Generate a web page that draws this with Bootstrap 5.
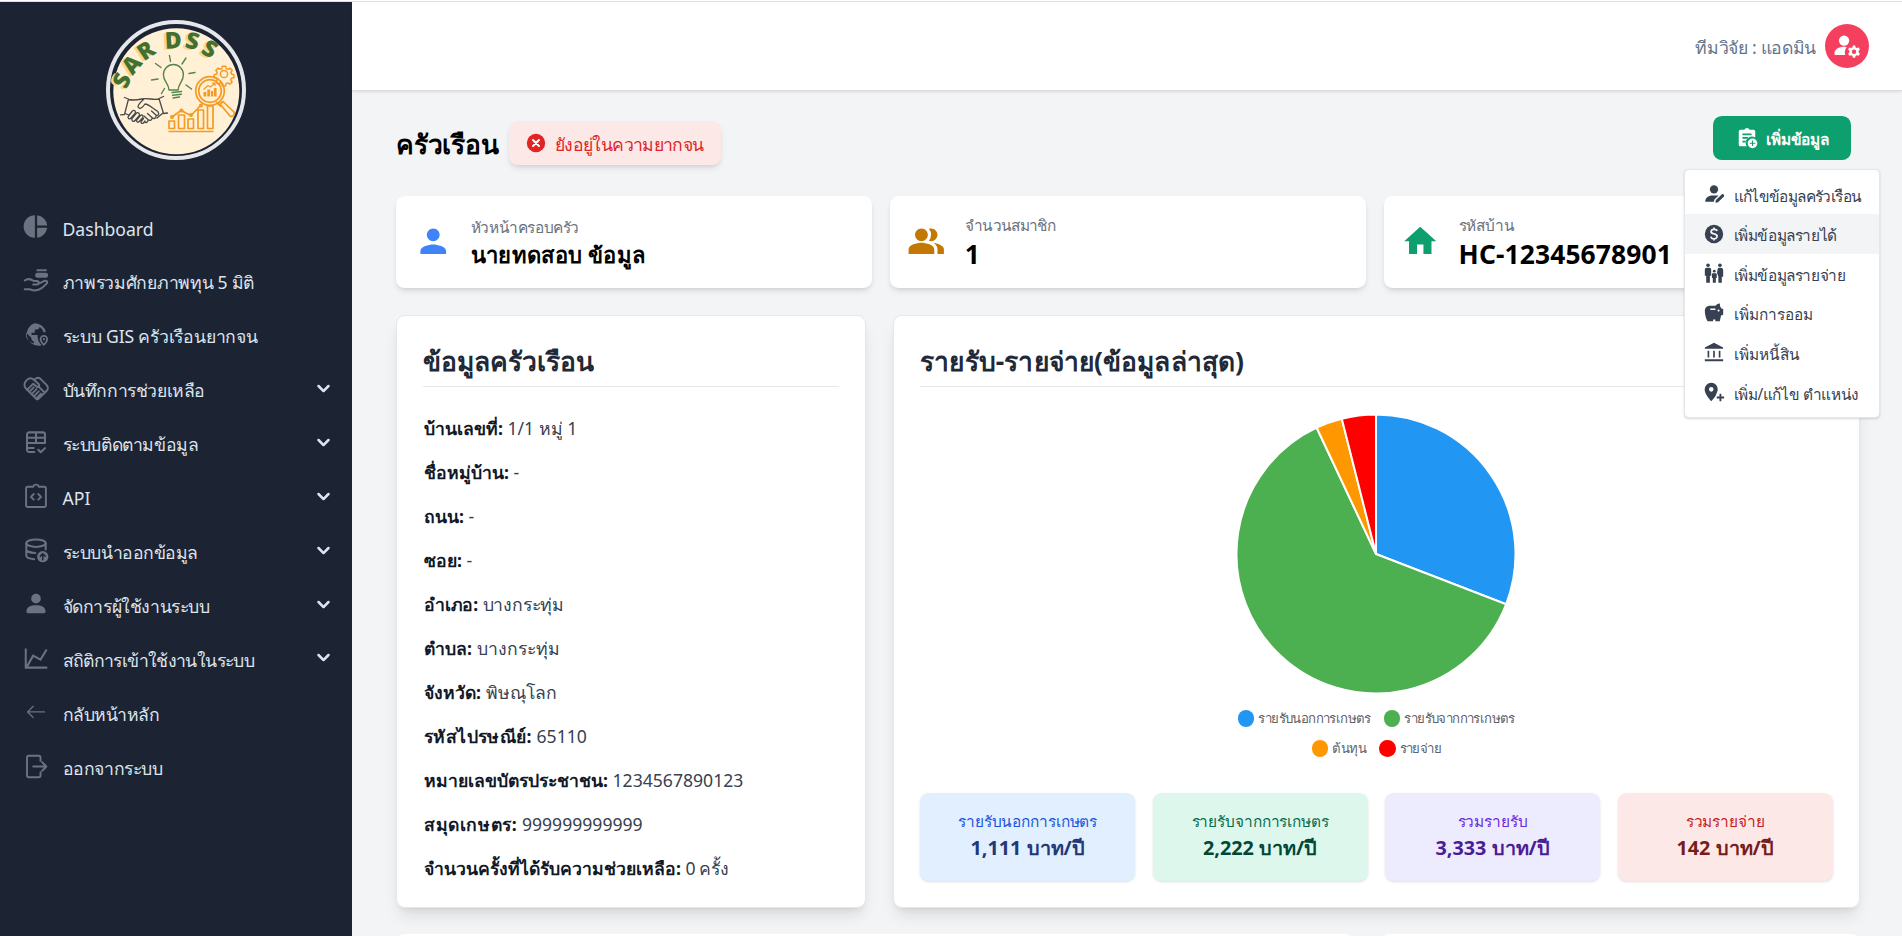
<!DOCTYPE html>
<html lang="th">
<head>
<meta charset="utf-8">
<meta name="viewport" content="width=device-width, initial-scale=1">
<title>SAR DSS</title>
<link rel="stylesheet" href="https://cdn.jsdelivr.net/npm/bootstrap@5.3.0/dist/css/bootstrap.min.css">
<style>
html{font-size:17.6px}
body{font-family:"Noto Sans",sans-serif;background:#f3f4f6;color:#000;line-height:1.5}
.app-shell{height:936px;border-top:1px solid #fff;overflow:hidden}
.app-frame{border-top:1px solid #dfe0e3;height:935px;overflow:hidden}
.app-side{width:352px;background:#1c2434;padding-top:18px}
.brand-ring{width:140px;height:140px;border:4px solid #e5e7eb;margin-bottom:40px}
.brand-ring svg{overflow:visible}
.side-nav .nav-link{height:53.95px;color:#dee4ee;padding:0 16px 0 20.5px;line-height:1.5}
.side-nav .nav-link span{margin-left:12px;padding-top:3.500px}
.side-nav .ico{width:30px;height:27px;color:#6b7280;flex:none}
.chev{width:25px;height:25px;margin-top:-1px}
/* tracking steps */
.tk2{letter-spacing:-.2px}.tk3{letter-spacing:-.3px}.tk4{letter-spacing:-.4px}.tk5{letter-spacing:-.5px}.tk6{letter-spacing:-.62px}
.tw2{letter-spacing:.12px}.tw3{letter-spacing:.27px}.tw4{letter-spacing:.4px}.tw6{letter-spacing:.6px}
.top-head{height:89px;border-bottom:1px solid #dcdde0;box-shadow:0 1px 3px rgba(0,0,0,.1);padding-right:33px}
.who{color:#64748b;padding-top:3px}
.avatar{width:44px;height:44px;background:#f43f5e}
.page-body{padding:25px 42px 0 44px}
.head-row{height:80px}
.head-left{margin-top:5px}
.page-title{font-size:1.5rem;font-weight:700;line-height:2rem;padding-top:3px}
.status-pill{background:#fde8e8;color:#e02424;height:44px;border-radius:.5rem;box-shadow:0 4px 6px -1px rgba(0,0,0,.1),0 2px 4px -2px rgba(0,0,0,.1);padding:0 17.6px 0 17px;margin-left:10.500px}
.status-pill span{padding-top:2px}
.add-btn{background:#0e9f6e;color:#fff;width:138px;height:44px;border-radius:.5rem;font-size:.875rem;font-weight:600;border:0}
.add-btn span{padding-top:3px}
.add-menu{top:53px;right:-28.500px;width:195.5px;border:1px solid #e5e7eb;border-radius:.25rem;padding:4.8px 0;font-size:.875rem;box-shadow:0 1px 3px rgba(0,0,0,.1),0 1px 2px rgba(0,0,0,.06);min-width:0;z-index:10}
.add-menu .dropdown-item{height:39.6px;padding:3px 0 0 17.6px;color:#374151;gap:8.8px}
.add-menu .dropdown-item.hot{background:#f3f4f6}
.add-menu svg{width:22px;height:22px;margin-top:-4px;flex:none}
.tri{display:grid;grid-template-columns:repeat(3,1fr)}
.kpi{background:#fff;height:92.4px;border-radius:.5rem;box-shadow:0 4px 6px -1px rgba(0,0,0,.1),0 2px 4px -2px rgba(0,0,0,.1);gap:18.8px}
.kpi>svg{width:38.5px;height:38.5px;flex:none;margin-top:-1px}
.kpi>div{padding-top:2px}
.kpi-label{font-size:.875rem;line-height:22px;color:#6b7280}
.kpi-val{font-size:1.5rem;line-height:2rem;font-weight:700}
.kpi-val.name{font-size:1.25rem;line-height:1.75rem}
.panel{background:#fff;border:1px solid #e5e7eb;border-radius:.5rem;box-shadow:0 10px 15px -3px rgba(0,0,0,.1),0 4px 6px -4px rgba(0,0,0,.1);padding:26.4px;height:593px}
.panel-title{font-size:1.5rem;line-height:2rem;font-weight:700;color:#1f2937;border-bottom:1px solid #e5e7eb;padding:2px 0 6.8px;margin:0}
.facts{margin:27.4px 0 0;padding-left:.6px;color:#374151}
.facts div{line-height:26.4px;margin-bottom:17.6px}
.facts b{color:#111827}
.wide{grid-column:span 2}
.pie{width:282px;height:282px;margin:25.600px auto 0;display:block}
.legend-row{font-size:13.2px;color:#5f6368;height:30px;gap:13px;letter-spacing:-.6px}
.legend-row i{width:16.6px;height:16.6px;border-radius:50%;margin-right:4px}
.c-blue{background:#2196f3}.c-green{background:#4caf50}.c-orange{background:#ff9800}.c-red{background:#f00}
.pie-legend{margin-top:9px}
.quad{display:grid;grid-template-columns:repeat(4,1fr);gap:17.6px;margin-top:29px}
.tile{height:88px;border-radius:.5rem;padding-top:18.4px;text-align:center;box-shadow:0 1px 3px rgba(0,0,0,.1),0 1px 2px -1px rgba(0,0,0,.1)}
.tile small{display:block;font-size:.875rem;line-height:22px;letter-spacing:-.12px}
.tile strong{display:block;font-size:1.125rem;line-height:30.8px}
.t-blue{background:#e1effe;color:#1a56db}.t-blue strong{color:#233876}
.t-green{background:#def7ec;color:#046c4e}.t-green strong{color:#014737}
.t-purple{background:#edebfe;color:#6c2bd9}.t-purple strong{color:#4a1d96}
.t-red{background:#fde8e8;color:#c81e1e}.t-red strong{color:#771d1d}
.next-row{display:grid;grid-template-columns:2fr 1fr;gap:26.4px;margin-top:26px}
.next-row div{background:#fff;border-radius:.5rem .5rem 0 0;height:40px}
</style>
</head>
<body>
<svg class="d-none" xmlns="http://www.w3.org/2000/svg">
<symbol id="chev" viewBox="0 0 20 20"><path fill="currentColor" d="M5.293 7.293a1 1 0 0 1 1.414 0L10 10.586l3.293-3.293a1 1 0 1 1 1.414 1.414l-4 4a1 1 0 0 1-1.414 0l-4-4a1 1 0 0 1 0-1.414z"/></symbol>
</svg>
<div class="app-shell"><div class="app-frame d-flex">
<aside class="app-side flex-shrink-0 d-flex flex-column align-items-center">
  <div class="brand-ring rounded-circle flex-shrink-0">
    <svg width="132" height="132" viewBox="110 24 132 132" fill="none">
      <circle cx="176.3" cy="91.3" r="63" fill="#fff0d6"/>
      <g font-family="Open Sans,Noto Sans,sans-serif" font-weight="800" font-size="23" text-anchor="middle">
        <g fill="#f7d68f" transform="translate(-2.500 1)"><text y="8.300" transform="translate(121.700 80.300) rotate(-66)">S</text><text y="8.300" transform="translate(131.500 64.300) rotate(-50)">A</text><text y="8.300" transform="translate(145.700 50.300) rotate(-34)">R</text><text y="8.300" transform="translate(173.300 40) rotate(-3)">D</text><text y="8.300" transform="translate(192.700 40.700) rotate(13)">S</text><text y="8.300" transform="translate(210 48.500) rotate(30)">S</text></g>
        <g fill="#42702f"><text y="8.300" transform="translate(121.700 80.300) rotate(-66)">S</text><text y="8.300" transform="translate(131.500 64.300) rotate(-50)">A</text><text y="8.300" transform="translate(145.700 50.300) rotate(-34)">R</text><text y="8.300" transform="translate(173.300 40) rotate(-3)">D</text><text y="8.300" transform="translate(192.700 40.700) rotate(13)">S</text><text y="8.300" transform="translate(210 48.500) rotate(30)">S</text></g>
      </g>
      <g stroke="#54864a" stroke-width="1.4" stroke-linecap="round" stroke-linejoin="round">
        <path d="M169 90c-.3-7-5.600-8-5.600-15.500a10 10 0 0 1 20 0c0 7.500-4.800 8.500-5.300 15.500zM172 92.500l9.500-1M172.500 95.200l9-1M173 98l6.500-1M170.500 61.500l-1-6M182 64l4-6M189 73.500l6-1M186 85l5.500 4M161 67.500l-5.500-4M158 79l-6.500 1M164.500 88.500l-3 5"/>
      </g>
      <g stroke="#4a4a4a" stroke-width="1.300" stroke-linecap="round" stroke-linejoin="round">
        <path d="M124.500 97.500l4 1.500-4 15.500-4 .3M163.500 96.500l-4.500 2 4.500 15 4-.5M128.500 99.500c5 1 9 .5 13-.5 6-1.500 12 1.500 17.500 0M144 99c-3 3-6 5-6 8 2 3 5 0 7-3 4 0 7 4 13 7.500M125 113.500l4 1.500M163 113l-6 5M158 112c1.500 2 .5 3.500-1.500 3.500l-5-4.500M156 116c0 2.500-2 3-3.500 2l-5-4.500M152 118.500c-.5 2-2.500 2.500-4 1l-4-3.500M148 120.500c-.5 2-2 2.500-3.500 1.500"/>
        <path d="M132 111.500l-3.500 4.500c-1.500 2 .8 4 2.500 2l4-4.500c1.500-2-1-4.500-3-2zM136.500 113l-4.500 5.500c-1 2 1.500 4 3 2l4-4.500c1.500-2-1-4.500-2.500-3zM140.500 115.500l-3.500 4c-1.500 2 .8 3.500 2.200 2l3.300-3.500c1.500-2-.5-4-2-2.500zM143.500 118.500l-2 2.500c-1.500 2 .8 3 2 2l1.500-2"/>
      </g>
      <g stroke="#f59a22" stroke-width="1.700" stroke-linejoin="round">
        <path d="M168.500 131.500h45M169 121h5.500v7.500H169zM178.500 115h6v13.500h-6zM188 119h5.500v9.500H188zM198 110h5.500v18.500H198zM207.500 106h5.500v22.500h-5.500zM172 117l9-6.500 10 5 10-10.500"/>
        <circle cx="210" cy="91" r="14.300"/><circle cx="210" cy="91" r="11.300"/>
        <path d="M220 104l3-2.500 11 10.500c1.500 2.500-1.500 5.500-4 4zM216 102l5 4.500"/>
        <circle cx="224" cy="74" r="3.600" stroke-width="1.500"/>
        <path stroke-width="1.500" d="M222.300 66.300h3.400l.5 2.400 1.600.7 2.100-1.300 2.300 2.300-1.300 2.100.6 1.600 2.400.6v3l-2.400.6-.7 1.500 1.300 2.100-2.300 2.300-2.100-1.300-1.500.6-.6 2.400h-3.200l-.5-2.400-1.600-.6-2.100 1.300-2.300-2.300 1.300-2.100-.6-1.500-2.400-.6v-3l2.400-.6.6-1.600-1.300-2.100 2.300-2.300 2.100 1.300 1.500-.7z"/>
        <circle cx="172" cy="117" r="1.200"/><circle cx="181.500" cy="110.500" r="1.200"/><circle cx="191" cy="115" r="1.200"/><circle cx="201" cy="105.500" r="1.200"/>
        <g fill="#f59a22" stroke="none"><path d="M203.500 92h2.800v4.500h-2.800zM207.300 89.500h2.800v7h-2.800zM211 91h2v5.500h-2zM213.800 88h2.800v8.500h-2.800z"/></g>
        <path stroke-width="1.200" d="M203.500 89.500l4.500-4 2.500 1.500 4-3.500M212 83.200h3v2.800"/>
      </g>
    </svg>
  </div>
  <nav class="side-nav nav flex-column w-100 flex-nowrap">
    <a class="nav-link d-flex align-items-center" href="#"><svg class="ico" viewBox="0 0 24 24" fill="currentColor"><path d="M11 2v20a10 10 0 0 1 0-20zM13 2.050V11h8.950A10 10 0 0 0 13 2.050zM13 13v8.950A10 10 0 0 0 21.950 13z"/></svg><span>Dashboard</span></a>
    <a class="nav-link d-flex align-items-center" href="#"><svg class="ico" viewBox="0 0 24 24" fill="none" stroke="currentColor" stroke-width="1.800" stroke-linecap="round" stroke-linejoin="round"><path d="M2 12c3.500-2.500 6-1 8 .5h3c1.800 0 1.800 3 0 3H9.500M15 14.500l4-2c2.500-1 4 .8 2 2.700-4 4.300-8.500 6-11.500 5.500l-3.500-.9H2"/><g fill="currentColor" stroke="none"><path d="M12.500 2h9v1.800h-9zM13 5h8a2.300 2.300 0 0 1 0 4.500h-8a2.300 2.300 0 0 1 0-4.500z"/></g></svg><span class="tk3">ภาพรวมศักยภาพทุน 5 มิติ</span></a>
    <a class="nav-link d-flex align-items-center" href="#"><svg class="ico" viewBox="0 0 24 24" fill="currentColor"><path fill-rule="evenodd" d="M11 2a10 10 0 0 1 9.800 8h-2.100A8 8 0 0 0 15 5.100v.4c0 1-.9 2-2 2h-2v2c0 .6-.4 1-1 1H8v2h5.500c-.4 3 .6 6.500 3.500 9A10 10 0 1 1 11 2zM10 19.900V18c-1.100 0-2-.9-2-2v-1l-4.800-4.800A8 8 0 0 0 10 19.900z"/><path fill-rule="evenodd" d="M19 12.500a3.700 3.700 0 0 0-3.700 3.700c0 2.600 3.700 6 3.700 6s3.700-3.400 3.700-6a3.700 3.700 0 0 0-3.700-3.700zm0 1.500a2.100 2.100 0 0 1 2.100 2.200c0 1.300-1 2.500-2.100 3.800-1.100-1.300-2.100-2.500-2.100-3.800A2.100 2.100 0 0 1 19 14z"/><circle cx="19" cy="16.200" r="1"/></svg><span class="tk2">ระบบ GIS ครัวเรือนยากจน</span></a>
    <a class="nav-link d-flex align-items-center" href="#"><svg class="ico" viewBox="0 0 24 24" fill="none" stroke="currentColor" stroke-width="1.700" stroke-linejoin="round" stroke-linecap="round"><path d="M12.500 21.500L3 12c-2-2.500-1.500-5 .5-7.200C5.500 2.500 8 2.500 10 4l4.500 4.200c1.300 1.500-.8 3-2 2L9.500 7.800 5 12.300M10 4.500C12 2.500 14 2 15.500 3l6 6c1.500 2 1.500 3.500 0 5L14 21.300c-.7.500-1 .5-1.500.2M14 10l5.500 5.500M6.500 14.500l3.500-3.500M8.500 16.500l4-4M10.500 18.500l4-4M12.500 20.500l4-4"/></svg><span class="tk4">บันทึกการช่วยเหลือ</span><svg class="chev ms-auto"><use href="#chev"/></svg></a>
    <a class="nav-link d-flex align-items-center" href="#"><svg class="ico" viewBox="0 0 24 24" fill="none" stroke="currentColor" stroke-width="1.800" stroke-linejoin="round" stroke-linecap="round"><path d="M10.500 20.500H6a2 2 0 0 1-2-2V5a2 2 0 0 1 2-2h12a2 2 0 0 1 2 2v7.500H4M4 7.800h16M12 3v9.500M4 16.800h6M14 18.500l2.200 2.200L20 17"/></svg><span class="tk4">ระบบติดตามข้อมูล</span><svg class="chev ms-auto"><use href="#chev"/></svg></a>
    <a class="nav-link d-flex align-items-center" href="#"><svg class="ico" viewBox="0 0 24 24" fill="none" stroke="currentColor" stroke-width="1.700" stroke-linejoin="round" stroke-linecap="round"><path d="M9.500 3.300a2.600 2.600 0 0 1 5 0H19.500A1.300 1.300 0 0 1 20.800 4.600V20a1.300 1.300 0 0 1-1.300 1.300h-15A1.300 1.300 0 0 1 3.200 20V4.600A1.300 1.300 0 0 1 4.500 3.300zM10 9.800L7.500 12.300 10 14.800M14 9.800l2.500 2.500-2.500 2.500"/></svg><span>API</span><svg class="chev ms-auto"><use href="#chev"/></svg></a>
    <a class="nav-link d-flex align-items-center" href="#"><svg class="ico" viewBox="0 0 24 24" fill="none" stroke="currentColor" stroke-width="1.800" stroke-linecap="round"><ellipse cx="12" cy="5.500" rx="8.600" ry="3.300"/><path d="M3.400 5.500V16.500c0 1.700 2.800 2.900 7 3.200M20.600 5.500v5.500M3.400 11c0 1.700 3.500 3 8 3.200"/><circle cx="18" cy="17.500" r="5" fill="currentColor" stroke="none"/><path stroke="#1c2434" stroke-width="1.300" stroke-linejoin="round" d="M18 20.200v-5M15.900 17l2.100-2.100 2.100 2.100"/></svg><span class="tk5">ระบบนำออกข้อมูล</span><svg class="chev ms-auto"><use href="#chev"/></svg></a>
    <a class="nav-link d-flex align-items-center" href="#"><svg class="ico" viewBox="0 0 24 24" fill="currentColor"><circle cx="12" cy="6.800" r="4.300"/><path d="M3.500 18.300c0-4 3.500-5.600 8.500-5.600s8.500 1.600 8.500 5.600c0 .8-.5 1.400-1.300 1.400H4.800c-.8 0-1.300-.6-1.300-1.400z"/></svg><span class="tk4">จัดการผู้ใช้งานระบบ</span><svg class="chev ms-auto"><use href="#chev"/></svg></a>
    <a class="nav-link d-flex align-items-center" href="#"><svg class="ico" viewBox="0 0 24 24" fill="none" stroke="currentColor" stroke-width="1.800"><path d="M2.900 3v17.100H22M4 19l5.500-9.500 6.500 3.500 5.500-9"/></svg><span class="tk6">สถิติการเข้าใช้งานในระบบ</span><svg class="chev ms-auto"><use href="#chev"/></svg></a>
    <a class="nav-link d-flex align-items-center" href="#"><svg class="ico" viewBox="0 0 24 24" fill="none" stroke="currentColor" stroke-width="1.100" stroke-linecap="round"><path d="M19.500 11.500h-15M9.500 6.500l-5 5 5 5"/></svg><span class="tk5">กลับหน้าหลัก</span></a>
    <a class="nav-link d-flex align-items-center" href="#"><svg class="ico" viewBox="0 0 24 24" fill="none" stroke="currentColor" stroke-width="1.700" stroke-linecap="round" stroke-linejoin="round"><path d="M16 7V4a1.500 1.500 0 0 0-1.500-1.500h-9A1.500 1.500 0 0 0 4 4v16A1.500 1.500 0 0 0 5.500 21.500h9a1.500 1.500 0 0 0 1.500-1.500V17M9.500 12h11.500M17.500 8.200l3.700 3.800-3.700 3.800"/></svg><span class="tk4">ออกจากระบบ</span></a>
  </nav>
</aside>
<div class="flex-grow-1 d-flex flex-column">
  <header class="top-head bg-white d-flex align-items-center justify-content-end flex-shrink-0">
    <span class="who me-2 tk3">ทีมวิจัย : แอดมิน</span>
    <span class="avatar rounded-circle d-flex align-items-center justify-content-center"><svg width="28" height="28" viewBox="0 0 24 24" fill="#fff"><circle cx="9.500" cy="7.300" r="4.400"/><path d="M9.500 12.700C5 12.700 1.200 14.700 1.200 18.600c0 .7.400 1.200 1.100 1.200h8.200a8 8 0 0 1 1.200-7z"/><path fill-rule="evenodd" d="M17 11.500h2l.4 1.700 1 .5 1.600-.5 1.100 1.700-1.200 1.300v1.200l1.200 1.300-1.100 1.700-1.600-.5-1 .5-.4 1.700h-2l-.4-1.700-1-.5-1.600.5-1.100-1.700 1.200-1.300v-1.200l-1.200-1.300 1.100-1.700 1.600.5 1-.5zm1 3.600a1.900 1.900 0 1 0 0 3.800 1.900 1.900 0 0 0 0-3.800z"/></svg></span>
  </header>
  <main class="page-body">
    <div class="head-row d-flex justify-content-between align-items-start">
      <div class="head-left d-flex align-items-center">
        <h1 class="page-title m-0 tk2">ครัวเรือน</h1>
        <div class="status-pill d-flex align-items-center"><svg width="20" height="20" viewBox="0 0 20 20"><circle cx="10" cy="10" r="9.200" fill="#e02424"/><path stroke="#fff" stroke-width="2" stroke-linecap="round" d="M7 7l6 6M13 7l-6 6"/></svg><span class="ms-2 tk6">ยังอยู่ในความยากจน</span></div>
      </div>
      <div class="position-relative me-2">
        <button class="add-btn d-flex align-items-center justify-content-center gap-2" type="button"><svg width="22" height="22" viewBox="0 0 24 24" fill="#fff"><path fill-rule="evenodd" d="M9.200 3a3 3 0 0 1 5.600 0H19a2 2 0 0 1 2 2v6.500A6.800 6.800 0 0 0 11.700 21H5a2 2 0 0 1-2-2V5a2 2 0 0 1 2-2zM7 7v2h10V7zm0 4v1.800h6V11zm0 4v1.800h4V15z"/><path fill-rule="evenodd" d="M18 12.500a5.300 5.300 0 1 0 0 10.600 5.300 5.300 0 0 0 0-10.600zm.6 2.300v2.400H21v1.200h-2.400v2.400h-1.200v-2.400H15v-1.200h2.400v-2.400z"/></svg><span class="tk2">เพิ่มข้อมูล</span></button>
        <div class="add-menu dropdown-menu show position-absolute">
          <a class="dropdown-item d-flex align-items-center tk6" href="#"><svg viewBox="0 0 24 24" fill="currentColor"><circle cx="12" cy="7" r="4.500"/><path d="M2.500 20.500c0-4.500 3-7 8-7h6.500L12.500 18l-.7 2.500zM13.500 21.500l.6-2.900 6.600-6.300c1-.8 3.200 1.200 2.200 2.300l-6.500 6.300z"/></svg>แก้ไขข้อมูลครัวเรือน</a>
          <a class="dropdown-item hot d-flex align-items-center tk4" href="#"><svg viewBox="0 0 24 24"><circle cx="12" cy="12" r="10" fill="currentColor"/><path fill="none" stroke="#f3f4f6" stroke-width="1.900" d="M15.300 8.800C15 7.500 13.800 6.900 12.200 6.900c-4 0-4.400 3.700-1.300 4.600l2.200.7c3.700 1.200 2.400 5-1 5-2 0-3.200-.9-3.500-2.400M12 5v2M12 17v2"/></svg>เพิ่มข้อมูลรายได้</a>
          <a class="dropdown-item d-flex align-items-center tk4" href="#"><svg viewBox="0 0 24 24" fill="currentColor"><circle cx="5.500" cy="3.500" r="2"/><circle cx="18.500" cy="3.500" r="2"/><circle cx="12.300" cy="10" r="1.500"/><path d="M4 6.300h3c1.100 0 1.900.8 1.900 1.900V15H7.500v7.500h-4V15H2V8.200c0-1.100.9-1.900 2-1.900zM17.500 6.300h2c1.500 0 2.500 1.200 2.500 2.700V16h-1.500v6.500h-3.700V16l-1.500-4 .6-4c.2-1 .7-1.700 1.600-1.700zM11 12.300h2.700c.8 0 1.300.5 1.300 1.200V17.500h-1v5h-3.300v-5h-1v-4c0-.7.500-1.200 1.300-1.200z"/></svg>เพิ่มข้อมูลรายจ่าย</a>
          <a class="dropdown-item d-flex align-items-center" href="#"><svg viewBox="0 0 24 24" fill="currentColor"><path fill-rule="evenodd" d="M2 9.500C2 6 4.500 4 8 4h5.500C14.500 2.700 16 1.500 18.500 1.500v3c.8.8 1.400 1.700 1.700 2.800H22v6.500l-2.300.8-1.400 6.400h-4.800v-1.800h-2.500V21H5c-2-3-3-7.500-3-11.500zM8 7v1.600h5.500V7zm9 1.300a1.100 1.100 0 1 0 0 2.200 1.100 1.100 0 0 0 0-2.200z"/></svg>เพิ่มการออม</a>
          <a class="dropdown-item d-flex align-items-center" href="#"><svg viewBox="0 0 24 24" fill="currentColor"><path d="M12 2l10 5v1.500H2V7zM5 10.500h1.800V18H5zM11.100 10.500h1.800V18h-1.800zM17.200 10.500H19V18h-1.800zM2 20h20v2H2z"/></svg>เพิ่มหนี้สิน</a>
          <a class="dropdown-item d-flex align-items-center tk4" href="#"><svg viewBox="0 0 24 24" fill="currentColor"><path fill-rule="evenodd" d="M9 2a7.200 7.200 0 0 0-7.200 7.200C1.800 14.500 9 22 9 22s2.800-2.900 4.900-6.300l2.200-5.500A7.200 7.200 0 0 0 9 2zm0 4.600a2.500 2.500 0 1 1 0 5 2.500 2.500 0 0 1 0-5z"/><path d="M18 14h2v3h3v2h-3v3h-2v-3h-3v-2h3z"/></svg>เพิ่ม/แก้ไข ตำแหน่ง</a>
        </div>
      </div>
    </div>
    <section class="tri gap-3">
      <div class="kpi d-flex align-items-center px-3"><svg viewBox="0 0 24 24" fill="#3f83f8"><path d="M12 12c2.210 0 4-1.790 4-4s-1.790-4-4-4-4 1.790-4 4 1.790 4 4 4zm0 2c-2.670 0-8 1.340-8 4v2h16v-2c0-2.660-5.330-4-8-4z"/></svg><div><div class="kpi-label tk4">หัวหน้าครอบครัว</div><div class="kpi-val name tw3">นายทดสอบ ข้อมูล</div></div></div>
      <div class="kpi d-flex align-items-center px-3"><svg viewBox="0 0 24 24" fill="#c27803"><path d="M16.670 13.130C18.040 14.060 19 15.320 19 17v3h4v-3c0-2.180-3.570-3.470-6.330-3.870zM15 12c2.210 0 4-1.790 4-4s-1.790-4-4-4c-.47 0-.91.1-1.330.24a5.980 5.980 0 0 1 0 7.520c.42.14.86.24 1.330.24zM9 12c2.210 0 4-1.790 4-4s-1.790-4-4-4-4 1.790-4 4 1.790 4 4 4zm0 1c-2.670 0-8 1.340-8 4v3h16v-3c0-2.660-5.330-4-8-4z"/></svg><div><div class="kpi-label tk6">จำนวนสมาชิก</div><div class="kpi-val">1</div></div></div>
      <div class="kpi d-flex align-items-center px-3"><svg viewBox="0 0 24 24" fill="#0e9f6e"><path d="M10 20v-6h4v6h5v-8h3L12 3 2 12h3v8z"/></svg><div><div class="kpi-label tk2">รหัสบ้าน</div><div class="kpi-val tw2">HC-12345678901</div></div></div>
    </section>
    <section class="tri gap-4 mt-4">
      <div class="panel">
        <h2 class="panel-title">ข้อมูลครัวเรือน</h2>
        <div class="facts">
          <div><b>บ้านเลขที่:</b> 1/1 หมู่ 1</div>
          <div><b>ชื่อหมู่บ้าน:</b> -</div>
          <div><b>ถนน:</b> -</div>
          <div><b>ซอย:</b> -</div>
          <div><b class="tk2">อำเภอ:</b> <span class="tk2">บางกระทุ่ม</span></div>
          <div><b>ตำบล:</b> บางกระทุ่ม</div>
          <div><b>จังหวัด:</b> พิษณุโลก</div>
          <div><b class="tw4">รหัสไปรษณีย์:</b> 65110</div>
          <div><b>หมายเลขบัตรประชาชน:</b> 1234567890123</div>
          <div><b class="tw6">สมุดเกษตร:</b> 999999999999</div>
          <div><b>จำนวนครั้งที่ได้รับความช่วยเหลือ:</b> <span class="tk4">0 ครั้ง</span></div>
        </div>
      </div>
      <div class="panel wide">
        <h2 class="panel-title tw2">รายรับ-รายจ่าย(ข้อมูลล่าสุด)</h2>
        <svg class="pie" viewBox="-141 -141 282 282" stroke="#fff" stroke-width="2" stroke-linejoin="round">
          <path fill="#2196f3" d="M0 0L0 -139.500A139.500 139.500 0 0 1 130.100 50.300Z"/>
          <path fill="#4caf50" d="M0 0L130.100 50.300A139.500 139.500 0 1 1 -59.300 -126.300Z"/>
          <path fill="#ff9800" d="M0 0L-59.300 -126.300A139.500 139.500 0 0 1 -34.200 -135.200Z"/>
          <path fill="#f00" d="M0 0L-34.200 -135.200A139.500 139.500 0 0 1 0 -139.500Z"/>
        </svg>
        <div class="pie-legend">
        <div class="legend-row d-flex justify-content-center align-items-center"><span class="d-flex align-items-center"><i class="c-blue"></i>รายรับนอกการเกษตร</span><span class="d-flex align-items-center"><i class="c-green"></i>รายรับจากการเกษตร</span></div>
        <div class="legend-row d-flex justify-content-center align-items-center"><span class="d-flex align-items-center"><i class="c-orange"></i>ต้นทุน</span><span class="d-flex align-items-center"><i class="c-red"></i>รายจ่าย</span></div>
        </div>
        <div class="quad">
          <div class="tile t-blue"><small>รายรับนอกการเกษตร</small><strong>1,111 บาท/ปี</strong></div>
          <div class="tile t-green"><small>รายรับจากการเกษตร</small><strong>2,222 บาท/ปี</strong></div>
          <div class="tile t-purple"><small>รวมรายรับ</small><strong>3,333 บาท/ปี</strong></div>
          <div class="tile t-red"><small>รวมรายจ่าย</small><strong>142 บาท/ปี</strong></div>
        </div>
      </div>
    </section>
    <section class="next-row"><div></div><div></div></section>
  </main>
</div>
</div></div>
<script src="https://cdn.jsdelivr.net/npm/bootstrap@5.3.0/dist/js/bootstrap.bundle.min.js"></script>
</body>
</html>
